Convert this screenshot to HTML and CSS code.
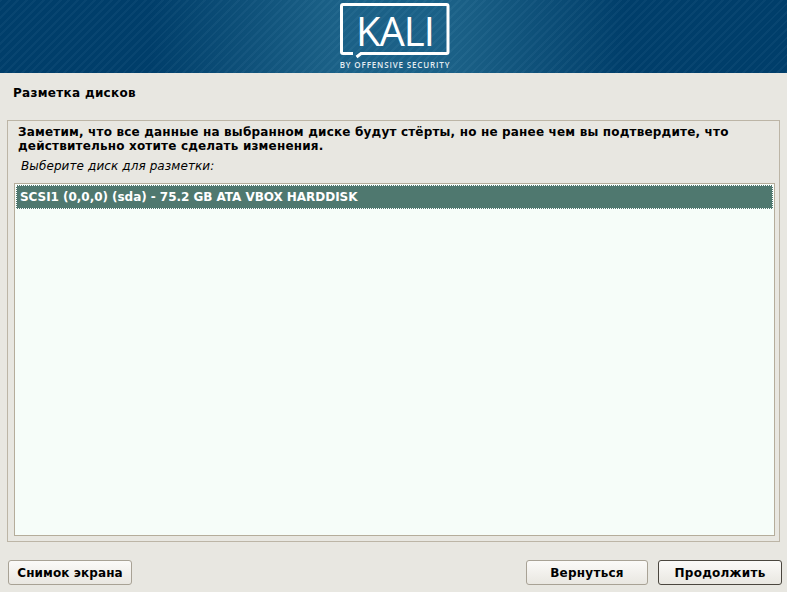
FILE: index.html
```html
<!DOCTYPE html>
<html lang="ru">
<head>
  <meta charset="UTF-8">
  <title>Разметка дисков</title>
  <link rel="stylesheet" href="styles.css">
</head>
<body>
  <div class="app">
    <header class="banner">
      <svg class="logo" width="110" height="72" viewBox="0 0 110 72">
        <path class="frame" d="M13 53.500 H3 Q1.500 53.500 1.500 52 V6 Q1.500 4.500 3 4.500 H106.500 Q108 4.500 108 6 V52 Q108 53.500 106.500 53.500 H21 L16.500 57"/>
        <text class="logo-name" x="55" y="46" text-anchor="middle">KALI</text>
        <text class="logo-sub" x="55" y="68" text-anchor="middle">BY OFFENSIVE SECURITY</text>
      </svg>
    </header>

    <h1 class="title">Разметка дисков</h1>

    <main class="panel">
      <p class="message">Заметим, что все данные на выбранном диске будут стёрты, но не ранее чем вы подтвердите, что действительно хотите сделать изменения.</p>
      <p class="prompt">Выберите диск для разметки:</p>
      <div class="listbox">
        <div class="row selected">SCSI1 (0,0,0) (sda) - 75.2 GB ATA VBOX HARDDISK</div>
      </div>
    </main>

    <footer class="actions">
      <button class="btn shot">Снимок экрана</button>
      <div class="actions-right">
        <button class="btn back">Вернуться</button>
        <button class="btn default">Продолжить</button>
      </div>
    </footer>
  </div>
</body>
</html>
```

FILE: styles.css
```css
html, body {
  margin: 0;
  padding: 0;
  height: 100%;
  font-family: "DejaVu Sans", sans-serif;
  font-size: 12px;
  background-color: #e8e7e1;
  color: #000;
}
.app {
  display: flex;
  flex-direction: column;
  height: 592px;
  overflow: hidden;
}
.banner {
  height: 73px;
  flex: none;
  display: flex;
  justify-content: center;
  overflow: hidden;
  background-color: #003f6c;
  background-image:
    repeating-linear-gradient(135deg, rgba(255,255,255,0.03) 0 2px, rgba(0,0,0,0.015) 2px 6px),
    linear-gradient(90deg, #003f6c 0, #003f6c 150px, #1b6289 335px, #1b6289 455px, #003f6c 625px, #003f6c 100%);
}
.logo {
  flex: none;
  margin-left: 3px;
}
.frame {
  fill: none;
  stroke: #fff;
  stroke-width: 3;
}
.logo-name {
  fill: #fff;
  font-family: "Open Sans", sans-serif;
  font-size: 40px;
  font-weight: 500;
  letter-spacing: -1px;
}
.logo-sub {
  fill: #e4edf2;
  font-family: "Open Sans", sans-serif;
  font-size: 8px;
  font-weight: 600;
  letter-spacing: 0.85px;
}
.title {
  margin: 0;
  padding: 13px 13px 0;
  height: 47px;
  box-sizing: border-box;
  font-size: 12px;
  line-height: 15px;
  font-weight: 700;
  letter-spacing: 0.3px;
}
.panel {
  flex: none;
  height: 422px;
  margin: 0 7px;
  padding: 4px 4px 4px 6px;
  box-sizing: border-box;
  border: 1px solid #bcb5a6;
  display: flex;
  flex-direction: column;
}
.message {
  margin: 0;
  padding: 0 4px 0 4px;
  font-weight: 700;
  line-height: 14px;
  letter-spacing: 0.18px;
}
.prompt {
  margin: 6px 0 10px;
  padding-left: 7px;
  font-style: italic;
  line-height: 14px;
  letter-spacing: 0.1px;
}
.listbox {
  height: 353px;
  box-sizing: border-box;
  border: 1px solid #b5ad9b;
  background-color: #f6fdf9;
  padding: 1px;
}
.row {
  height: 24px;
  line-height: 24px;
  padding-left: 4px;
  font-weight: 700;
  letter-spacing: -0.04px;
}
.selected {
  background-color: #4f786f;
  color: #fff;
  outline: 1px dotted #fff;
  outline-offset: -1px;
}
.actions {
  flex: none;
  display: flex;
  justify-content: space-between;
  padding: 18px 5px 0 8px;
}
.actions-right {
  display: flex;
  gap: 10px;
}
.btn {
  width: 124px;
  height: 25px;
  padding: 0;
  border: 1px solid #a8a295;
  border-radius: 3px;
  background: linear-gradient(#fbfaf8, #e9e7e1);
  font-family: "DejaVu Sans", sans-serif;
  font-size: 12px;
  font-weight: 700;
  letter-spacing: 0.25px;
  color: #000;
}
.shot {
  letter-spacing: 0.1px;
}
.back {
  width: 122px;
}
.default {
  border-color: #4a463e;
}
```
